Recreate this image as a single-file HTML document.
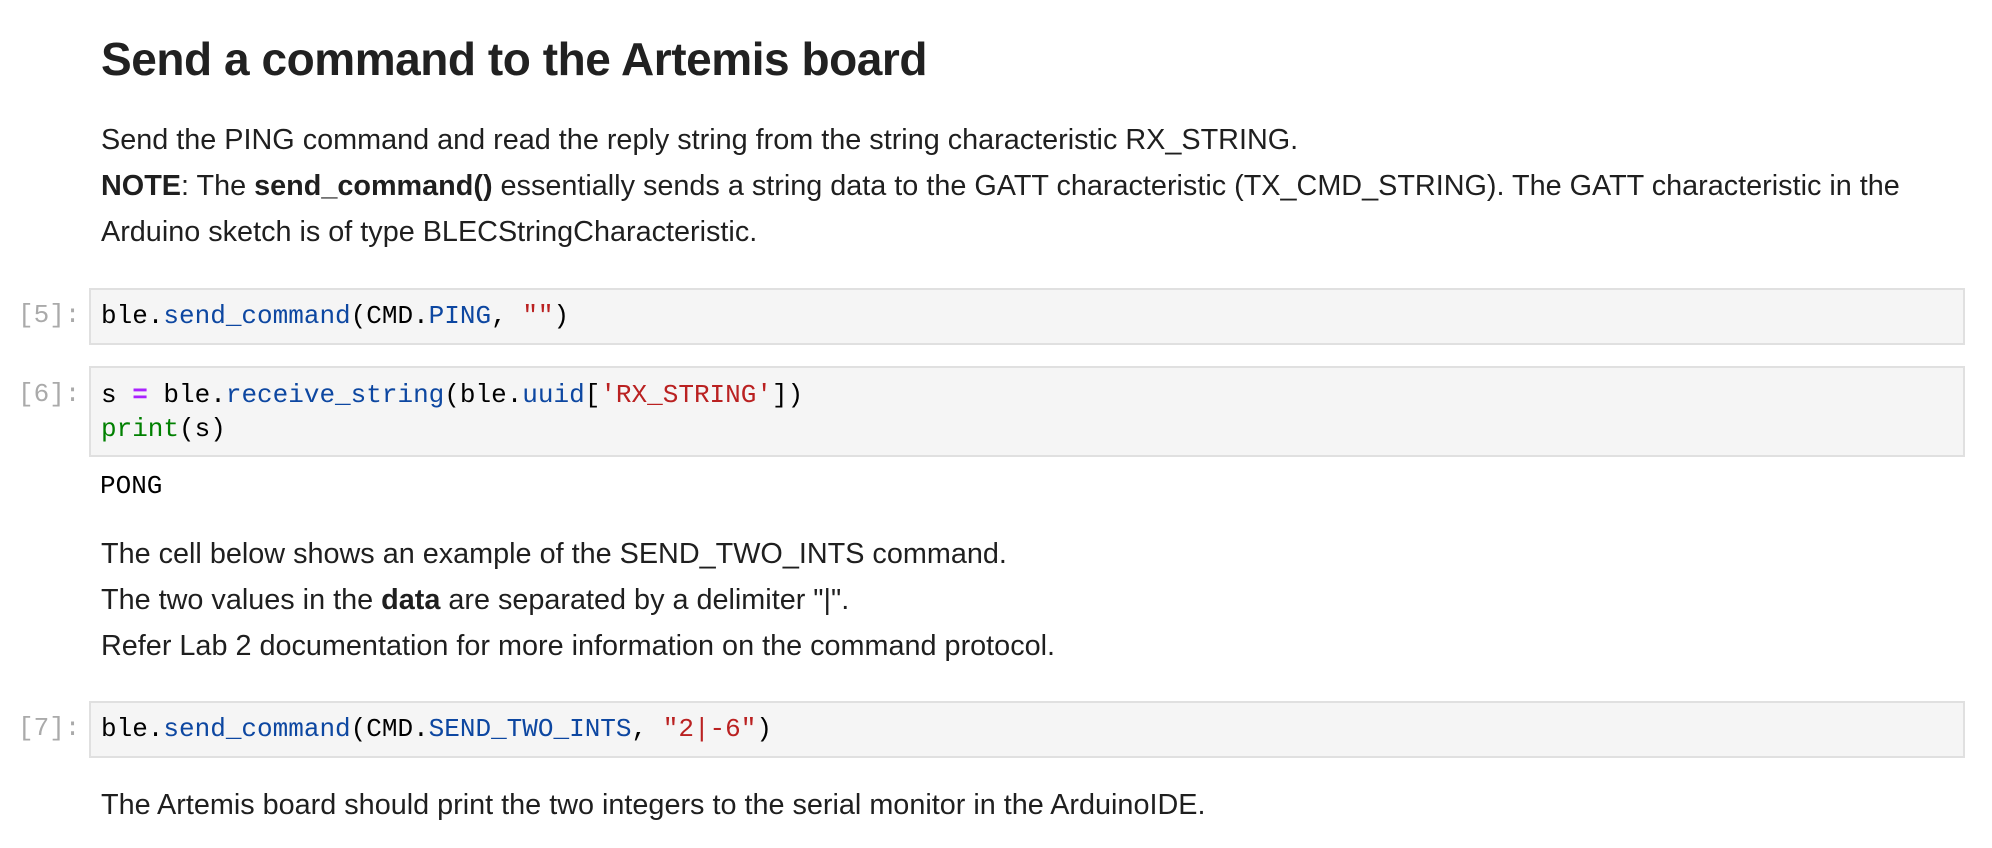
<!DOCTYPE html>
<html><head><meta charset="utf-8"><style>
body{margin:0;width:1992px;height:848px;background:#fff;position:relative;overflow:hidden;font-family:"Liberation Sans",sans-serif;color:#1f1f1f}
.a{position:absolute;white-space:nowrap}
h2{position:absolute;left:101px;top:32px;margin:0;font-size:46px;font-weight:bold;letter-spacing:-0.45px;color:#212121}
.p{font-size:28.8px;line-height:46px;left:101px}
.cell{position:absolute;left:89px;width:1876px;background:#f5f5f5;border:2px solid #e0e0e0;box-sizing:border-box}
.code{font-family:"Liberation Mono",monospace;font-size:26px;line-height:34px;position:absolute;left:10px;white-space:pre;color:#000}
.pr{font-family:"Liberation Mono",monospace;font-size:26px;color:#aaa;position:absolute;left:18px}
.b{color:#0d47a1}.s{color:#ba2121}.g{color:#008000}.o{color:#aa22ff;font-weight:bold}
</style></head><body>
<h2>Send a command to the Artemis board</h2>
<div class="a p" style="top:117px">Send the PING command and read the reply string from the string characteristic RX_STRING.<br><b>NOTE</b>: The <b>send_command()</b> essentially sends a string data to the GATT characteristic (TX_CMD_STRING). The GATT characteristic in the<br>Arduino sketch is of type BLECStringCharacteristic.</div>

<div class="pr" style="top:300px">[5]:</div>
<div class="cell" style="top:288px;height:57px"><div class="code" style="top:9px">ble.<span class="b">send_command</span>(CMD.<span class="b">PING</span>, <span class="s">""</span>)</div></div>

<div class="pr" style="top:379px">[6]:</div>
<div class="cell" style="top:366px;height:91px"><div class="code" style="top:10px">s <span class="o">=</span> ble.<span class="b">receive_string</span>(ble.<span class="b">uuid</span>[<span class="s">'RX_STRING'</span>])
<span class="g">print</span>(s)</div></div>

<div class="a code" style="left:100px;top:469px">PONG</div>

<div class="a p" style="top:531px">The cell below shows an example of the SEND_TWO_INTS command.<br>The two values in the <b>data</b> are separated by a delimiter "|".<br>Refer Lab 2 documentation for more information on the command protocol.</div>

<div class="pr" style="top:713px">[7]:</div>
<div class="cell" style="top:701px;height:57px"><div class="code" style="top:9px">ble.<span class="b">send_command</span>(CMD.<span class="b">SEND_TWO_INTS</span>, <span class="s">"2|-6"</span>)</div></div>

<div class="a p" style="top:782px">The Artemis board should print the two integers to the serial monitor in the ArduinoIDE.</div>
</body></html>
